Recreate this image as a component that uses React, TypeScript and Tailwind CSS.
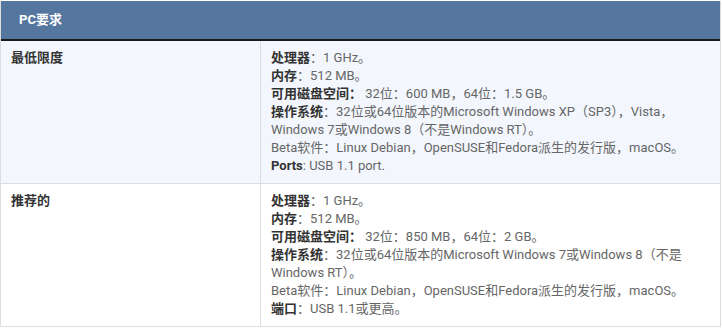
import React from 'react'

interface Spec {
    label: string
    value: string
    plain?: boolean
}

interface Row {
    name: string
    specs: Spec[]
    bg: string
}

const rows: Row[] = [
    {
        name: '最低限度',
        bg: 'bg-[#f3f7fd]',
        specs: [
            { label: '处理器', value: '：1 GHz。' },
            { label: '内存', value: '：512 MB。' },
            { label: '可用磁盘空间：', value: ' 32位：600 MB，64位：1.5 GB。' },
            { label: '操作系统', value: '：32位或64位版本的Microsoft Windows XP（SP3），Vista，Windows 7或Windows 8（不是Windows RT）。' },
            { label: 'Beta软件：Linux Debian，OpenSUSE和Fedora派生的发行版，macOS。', value: '', plain: true },
            { label: 'Ports', value: ': USB 1.1 port.' },
        ],
    },
    {
        name: '推荐的',
        bg: 'bg-white',
        specs: [
            { label: '处理器', value: '：1 GHz。' },
            { label: '内存', value: '：512 MB。' },
            { label: '可用磁盘空间：', value: ' 32位：850 MB，64位：2 GB。' },
            { label: '操作系统', value: '：32位或64位版本的Microsoft Windows 7或Windows 8（不是Windows RT）。' },
            { label: 'Beta软件：Linux Debian，OpenSUSE和Fedora派生的发行版，macOS。', value: '', plain: true },
            { label: '端口', value: '：USB 1.1或更高。' },
        ],
    },
]

export default function App() {
    return (
        <div className="w-[722px] h-[329px] bg-white pt-px font-['Roboto','Noto_Sans_CJK_SC',sans-serif] text-[13px] leading-[18px]">
            <div className="w-[721px] border-l border-r border-b border-[#dddddd]">
                {/* Header */}
                <div className="h-[38px] bg-[#54769f] border-b-2 border-[#1a1a1a] flex items-center px-[18px] box-content">
                    <span className="font-bold text-white">PC要求</span>
                </div>

                {rows.map((row, i) => (
                    <div
                        key={row.name}
                        className={`flex ${row.bg} ${i > 0 ? 'border-t border-[#dddddd]' : ''}`}
                    >
                        <div className="w-[260px] shrink-0 border-r border-[#dddddd] px-[10px] py-[8px] font-bold text-[#333333]">
                            {row.name}
                        </div>
                        <div className="flex-1 pl-[10px] pr-[20px] py-[8px] text-[#666666]">
                            {row.specs.map((s, j) => (
                                <div key={j}>
                                    {s.plain ? (
                                        s.label
                                    ) : (
                                        <>
                                            <span className="font-bold text-[#333333]">{s.label}</span>
                                            {s.value}
                                        </>
                                    )}
                                </div>
                            ))}
                        </div>
                    </div>
                ))}
            </div>
        </div>
    )
}
